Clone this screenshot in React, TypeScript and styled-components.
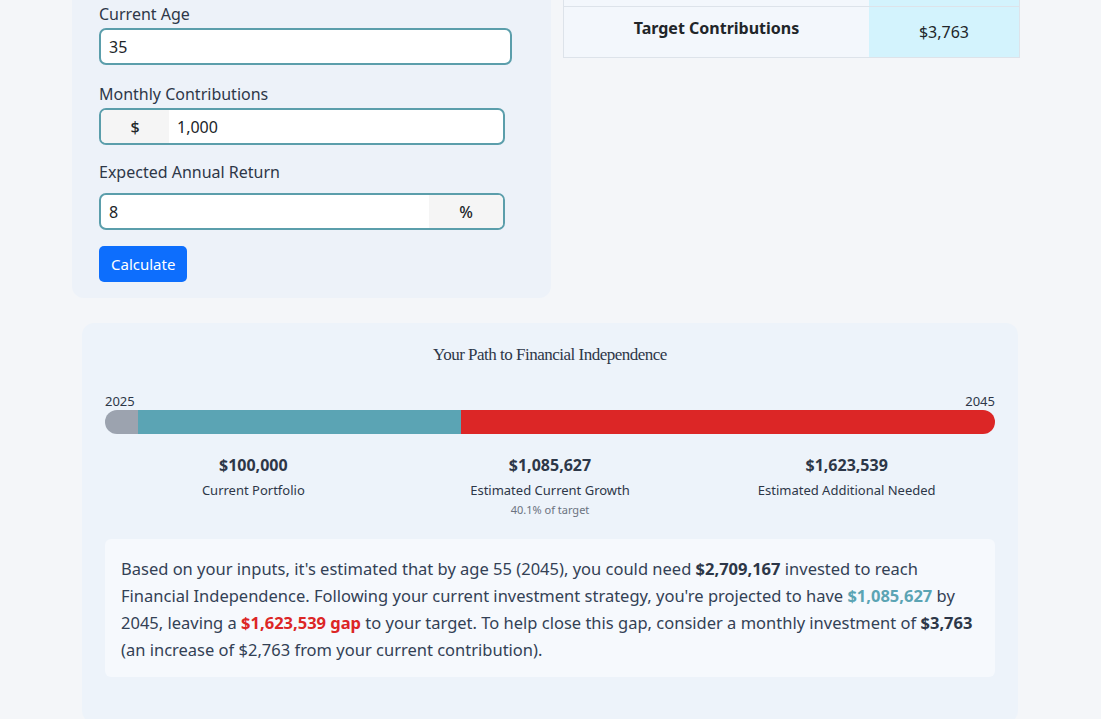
import styled, { createGlobalStyle } from 'styled-components'

const Global = createGlobalStyle`
  body {
    margin: 0;
    background: #f4f6f9;
    font-family: "Noto Sans", "Open Sans", sans-serif;
    color: #2d3748;
  }
`

const Page = styled.div`
  width: 1101px;
  height: 719px;
  overflow: hidden;
`

const TopRow = styled.div`
  display: flex;
  align-items: flex-start;
  padding-left: 72px;
  gap: 12px;
`

const FormCard = styled.div`
  width: 479px;
  box-sizing: border-box;
  background: #edf2f9;
  border-radius: 0 0 12px 12px;
  padding: 3px 27px 16px;
`

const Label = styled.div<{ mb?: number }>`
  font-size: 16px;
  line-height: 22px;
  margin-bottom: ${({ mb }) => mb ?? 3}px;
  color: #2d3748;
`

const Field = styled.div<{ w: number; gap: number }>`
  display: flex;
  width: ${({ w }) => w}px;
  height: 37px;
  box-sizing: border-box;
  border: 2px solid #5b9eab;
  border-radius: 7px;
  background: #fff;
  overflow: hidden;
  margin-bottom: ${({ gap }) => gap}px;
  font-size: 16px;
`

const Addon = styled.div<{ w: number }>`
  width: ${({ w }) => w}px;
  background: #f5f5f5;
  display: flex;
  align-items: center;
  justify-content: center;
  font-weight: 500;
  color: #212529;
`

const Value = styled.div`
  flex: 1;
  display: flex;
  align-items: center;
  padding-left: 8px;
  color: #212529;
`

const Button = styled.button`
  display: block;
  background: #0d6efd;
  color: #fff;
  border: none;
  border-radius: 5px;
  height: 36px;
  padding: 0 12px;
  font-family: inherit;
  font-size: 15px;
`

const Table = styled.div`
  width: 455px;
  border: 1px solid #dde3ea;
  border-top: none;
`

const TRow = styled.div<{ h: number }>`
  display: grid;
  grid-template-columns: 305px 1fr;
  height: ${({ h }) => h}px;
  & + & { border-top: 1px solid #dde3ea; }
`

const Cell = styled.div<{ accent?: boolean; bold?: boolean }>`
  background: ${({ accent }) => accent ? '#d3f3fd' : '#f3f7fc'};
  display: flex;
  justify-content: center;
  align-items: ${({ bold }) => bold ? 'flex-start' : 'center'};
  padding-top: ${({ bold }) => bold ? '10px' : '0'};
  font-weight: ${({ bold }) => bold ? 700 : 400};
  font-size: 16px;
  color: #212529;
`

const PathCard = styled.div`
  margin: 25px 0 0 82px;
  width: 936px;
  height: 400px;
  background: #edf3fa;
  border-radius: 12px;
  padding: 22px 23px;
  box-sizing: border-box;
`

const Title = styled.h3`
  margin: 0 0 27px;
  text-align: center;
  font-family: "Liberation Serif", serif;
  font-weight: 400;
  font-size: 17px;
  letter-spacing: -0.5px;
  color: #2d3748;
`

const Years = styled.div`
  display: flex;
  justify-content: space-between;
  font-size: 13px;
  color: #2d3748;
  margin-bottom: 0;
`

const Bar = styled.div`
  display: flex;
  height: 24px;
  border-radius: 12px;
  overflow: hidden;
`

const Seg = styled.div<{ c: string }>`
  background: ${({ c }) => c};
`

const Stats = styled.div`
  display: grid;
  grid-template-columns: repeat(3, 1fr);
  margin-top: 20px;
  text-align: center;
`

const Stat = styled.div`
  display: flex;
  flex-direction: column;
  align-items: center;
`

const Amount = styled.div`
  font-weight: 700;
  font-size: 16px;
  color: #2d3748;
  margin-bottom: 5px;
`

const StatLabel = styled.div`
  font-size: 13px;
  color: #2d3748;
`

const Sub = styled.div`
  font-size: 11px;
  color: #6b7280;
  margin-top: 3px;
`

const Summary = styled.div`
  margin-top: 22px;
  background: #f6f9fd;
  border-radius: 6px;
  padding: 16px 16px 14px;
  font-size: 16.5px;
  line-height: 27px;
  color: #334155;
  b { color: #2d3748; }
`

const Teal = styled.b`
  color: #5ba4b4 !important;
`

const Red = styled.b`
  color: #dc2626 !important;
`

export default function App() {
  return (
    <Page>
      <Global />
      <TopRow>
        <FormCard>
          <Label>Current Age</Label>
          <Field w={413} gap={18}><Value>35</Value></Field>
          <Label>Monthly Contributions</Label>
          <Field w={406} gap={16}><Addon w={68}>$</Addon><Value>1,000</Value></Field>
          <Label mb={10}>Expected Annual Return</Label>
          <Field w={406} gap={16}><Value>8</Value><Addon w={74}>%</Addon></Field>
          <Button>Calculate</Button>
        </FormCard>
        <Table>
          <TRow h={6}><Cell /><Cell accent /></TRow>
          <TRow h={50}><Cell bold>Target Contributions</Cell><Cell accent>$3,763</Cell></TRow>
        </Table>
      </TopRow>
      <PathCard>
        <Title>Your Path to Financial Independence</Title>
        <Years><span>2025</span><span>2045</span></Years>
        <Bar>
          <Seg c="#9ca3af" style={{ width: 33 }} />
          <Seg c="#5ba4b4" style={{ width: 323 }} />
          <Seg c="#dc2626" style={{ flex: 1 }} />
        </Bar>
        <Stats>
          <Stat><Amount>$100,000</Amount><StatLabel>Current Portfolio</StatLabel></Stat>
          <Stat><Amount>$1,085,627</Amount><StatLabel>Estimated Current Growth</StatLabel><Sub>40.1% of target</Sub></Stat>
          <Stat><Amount>$1,623,539</Amount><StatLabel>Estimated Additional Needed</StatLabel></Stat>
        </Stats>
        <Summary>
          Based on your inputs, it's estimated that by age 55 (2045), you could need <b>$2,709,167</b> invested to reach Financial Independence. Following your current investment strategy, you're projected to have <Teal>$1,085,627</Teal> by 2045, leaving a <Red>$1,623,539 gap</Red> to your target. To help close this gap, consider a monthly investment of <b>$3,763</b> (an increase of $2,763 from your current contribution).
        </Summary>
      </PathCard>
    </Page>
  )
}
